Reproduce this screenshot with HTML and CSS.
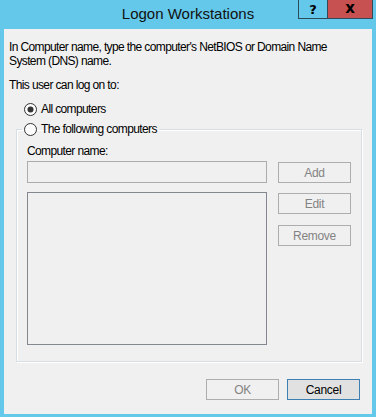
FILE: index.html
```html
<!DOCTYPE html>
<html lang="en">
<head>
    <meta charset="UTF-8">
    <title>Logon Workstations</title>
    <link rel="stylesheet" href="styles.css">
</head>
<body>

<div class="window">
    <div class="titlebar">
        <span class="title">Logon Workstations</span>
        <div class="caption-buttons">
            <span class="cap-btn help">?</span>
            <span class="cap-btn close">x</span>
        </div>
    </div>

    <div class="client">
        <p class="intro">In Computer name, type the computer's NetBIOS or Domain Name System (DNS) name.</p>
        <p class="caption">This user can log on to:</p>

        <label class="radio">
            <svg width="13" height="13" viewBox="0 0 13 13"><circle cx="6.5" cy="6.5" r="6" fill="#fcfcfc" stroke="#333"/><circle cx="6.5" cy="6.5" r="3" fill="#333"/></svg>
            All computers
        </label>

        <fieldset class="group">
            <legend>
                <label class="radio">
                    <svg width="13" height="13" viewBox="0 0 13 13"><circle cx="6.5" cy="6.5" r="6" fill="#fcfcfc" stroke="#333"/></svg>
                    The following computers
                </label>
            </legend>

            <div class="group-body">
                <span class="field-label">Computer name:</span>
                <div class="textbox"></div>
                <button class="btn" disabled>Add</button>
                <div class="listbox"></div>
                <div class="btn-stack">
                    <button class="btn" disabled>Edit</button>
                    <button class="btn" disabled>Remove</button>
                </div>
            </div>
        </fieldset>

        <div class="dialog-buttons">
            <button class="btn" disabled>OK</button>
            <button class="btn default">Cancel</button>
        </div>
    </div>
</div>

</body>
</html>
```

FILE: styles.css
```css
body {
    margin: 0;
    font-family: "Liberation Sans", Arial, sans-serif;
    font-size: 12px;
    letter-spacing: -0.62px;
    color: #000;
}

.window {
    width: 376px;
    height: 417px;
    box-sizing: border-box;
    background-color: #64c8ea;
    padding: 0 4px 3px 4px;
    display: flex;
    flex-direction: column;
}

.titlebar {
    height: 29px;
    position: relative;
    display: flex;
    justify-content: center;
}

.title {
    font-size: 15px;
    line-height: 15px;
    letter-spacing: 0;
    margin-top: 6px;
    color: #111;
}

.caption-buttons {
    position: absolute;
    top: 0;
    right: -1px;
    display: flex;
}

.cap-btn {
    height: 19px;
    box-sizing: border-box;
    border: 1px solid #2f4b5a;
    border-top: none;
    display: flex;
    justify-content: center;
    align-items: center;
    font-weight: bold;
    font-family: "DejaVu Sans", sans-serif;
    font-size: 13px;
    letter-spacing: 0;
}

.help {
    width: 29px;
    border-right: none;
}

.close {
    width: 46px;
    background-color: #c75050;
    font-size: 15px;
    padding-bottom: 3px;
}

.client {
    flex: 1;
    background-color: #f0f0f0;
    padding: 11px 10px 0 5px;
}

.intro,
.caption {
    margin: 0;
    line-height: 14px;
}

.caption {
    margin-top: 10px;
}

.radio {
    display: flex;
    align-items: center;
    gap: 4px;
    height: 14px;
    line-height: 14px;
    padding-left: 15px;
    margin-top: 10px;
}

.group {
    margin: 6px 0 0 7px;
    padding: 8px 10px 16px 10px;
    border: 1px solid #d5dfe5;
    box-shadow: inset 1px 1px #fff, 1px 1px #fff;
}

.group legend {
    padding: 0 2px;
    margin-left: -5px;
}

.group .radio {
    padding-left: 0;
    margin-top: 0;
}

.group-body {
    display: grid;
    grid-template-columns: 240px 73px;
    column-gap: 11px;
}

.field-label {
    grid-column: 1 / 3;
    line-height: 14px;
    margin-bottom: 3px;
}

.textbox {
    height: 22px;
    box-sizing: border-box;
    border: 1px solid #acacac;
    background-color: #f0f0f0;
}

.listbox {
    height: 153px;
    box-sizing: border-box;
    border: 1px solid #828790;
    background-color: #f0f0f0;
    margin-top: 9px;
}

.btn {
    height: 21px;
    width: 73px;
    box-sizing: border-box;
    border: 1px solid #adadad;
    background-color: #f0f0f0;
    font-family: "Liberation Sans", Arial, sans-serif;
    font-size: 12px;
    letter-spacing: -0.3px;
    color: #838383;
    padding: 0;
    margin-top: 1px;
}

.btn-stack {
    margin-top: 10px;
    display: flex;
    flex-direction: column;
    gap: 11px;
}

.btn-stack .btn {
    margin-top: 0;
}

.dialog-buttons {
    display: flex;
    justify-content: flex-end;
    gap: 8px;
    margin-top: 17px;
    padding-right: 2px;
}

.dialog-buttons .btn {
    margin-top: 0;
}

.btn.default {
    background-color: #e1e1e1;
    border-color: #3c7fb1;
    color: #000;
}
```
